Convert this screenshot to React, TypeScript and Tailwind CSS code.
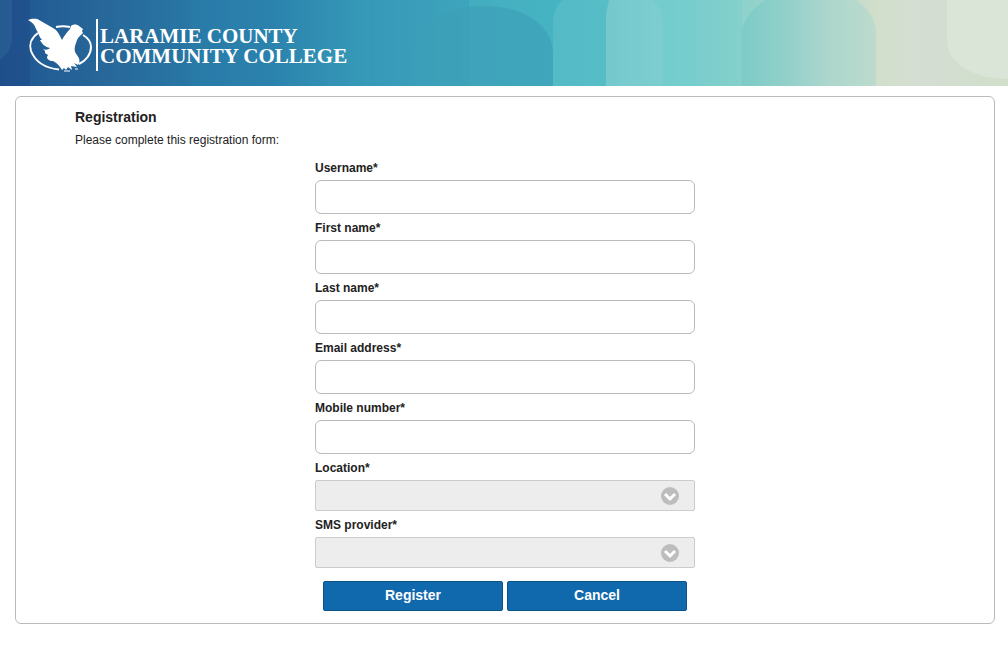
import type { ReactNode } from "react";

const textFields = [
  { id: "username", label: "Username", type: "text" },
  { id: "firstName", label: "First name", type: "text" },
  { id: "lastName", label: "Last name", type: "text" },
  { id: "email", label: "Email address", type: "email" },
  { id: "mobile", label: "Mobile number", type: "tel" },
];

const selectFields = [
  { id: "location", label: "Location" },
  { id: "smsProvider", label: "SMS provider" },
];

function BannerArt() {
  return (
    <svg
      aria-hidden="true"
      className="absolute inset-0 h-full w-full"
      viewBox="0 0 1008 86"
      preserveAspectRatio="none"
    >
      <defs>
        <linearGradient id="sky" gradientUnits="userSpaceOnUse" x1="0" y1="0" x2="1008" y2="0">
          <stop offset="0" stopColor="#20508a" />
          <stop offset="0.03" stopColor="#225b94" />
          <stop offset="0.1" stopColor="#276799" />
          <stop offset="0.19" stopColor="#2877a4" />
          <stop offset="0.28" stopColor="#2c85ae" />
          <stop offset="0.36" stopColor="#3799b8" />
          <stop offset="0.46" stopColor="#43adbf" />
          <stop offset="0.6" stopColor="#48b7c5" />
          <stop offset="0.68" stopColor="#76cdcd" />
          <stop offset="0.74" stopColor="#8dd2cb" />
          <stop offset="0.82" stopColor="#b0d6ca" />
          <stop offset="0.87" stopColor="#d2dfcb" />
          <stop offset="0.9" stopColor="#d4ded1" />
          <stop offset="0.93" stopColor="#d3ddd2" />
          <stop offset="1" stopColor="#d1dfca" />
        </linearGradient>
        <linearGradient id="arch" gradientUnits="userSpaceOnUse" x1="742" y1="0" x2="876" y2="0">
          <stop offset="0" stopColor="#7dcbc8" />
          <stop offset="0.35" stopColor="#93d0ca" />
          <stop offset="0.65" stopColor="#add6cd" />
          <stop offset="1" stopColor="#bcdbcc" />
        </linearGradient>
      </defs>
      <rect width="1008" height="86" fill="url(#sky)" />
      <path d="M0 0H12V38Q12 52 0 60Z" fill="#2b6296" fillOpacity="0.6" />
      <path d="M12 0H30V86H0V60Q12 52 12 38Z" fill="#204e8b" fillOpacity="0.7" />
      <path d="M191 0H278V86H191Z" fill="#2a82ae" fillOpacity="0.35" />
      <path d="M370 0H469V86H370Z" fill="#3797b9" fillOpacity="0.4" />
      <path d="M414 86V50C416 24 446 6 485 6C524 6 553 26 553 54V86Z" fill="#3c9fb8" fillOpacity="0.68" />
      <path d="M553 86V20Q554 8 563 0H742V86Z" fill="#76cdcd" fillOpacity="0.3" />
      <path d="M606 86V14L609 0H653Q663 9 663 20V86Z" fill="#88d1d2" fillOpacity="0.6" />
      <path d="M663 86V20Q663 9 653 0H690V86Z" fill="#75cdcd" fillOpacity="0.8" />
      <path d="M742 86V30Q746 12 766 0H855Q874 11 876 31V86Z" fill="url(#arch)" />
      <path d="M947 0H1008V79C974 79 947 63 947 42Z" fill="#dae5d8" />
    </svg>
  );
}

function EagleMark() {
  return (
    <svg aria-hidden="true" className="h-[54px] w-[66px] shrink-0" viewBox="0 0 66 54" fill="none">
      <path
        d="M10 15C3 20 1 27 3 33C7 43 16 50 31 51.5M51 46C58 43 63 36 63 29C63 24 60 20 55 17M28 9C33 8 37 8 42 9"
        stroke="#fff"
        strokeWidth="2"
      />
      <path
        d="M0 2C3 1 8 0 11 2L18 6L25 10C29 12 31 16 33 20L34 22C36 18 39 14 42 11L43 8C45 6 49 6 51 8L55 11L54 13L55 15C53 17 50 19 49 22L47 28C46 32 47 35 49 37C51 40 53 43 50 47L46 45L49 49L43 48L44 52L40 49L38 52L36 50L34 52L32 49C30 46 27 44 25 43C21 43 19 41 19 39L20 37L17 35L17 33L15 31C17 32 20 32 22 30C17 29 14 26 12 22L14 22C11 19 10 14 8 11C7 7 4 4 0 2Z"
        fill="#fff"
      />
      <path d="M47 51H50M36 53H42" stroke="#fff" strokeWidth="1" />
    </svg>
  );
}

function Field({ id, label, children }: { id: string; label: string; children: ReactNode }) {
  return (
    <div className="flex flex-col gap-1">
      <label htmlFor={id} className="text-xs font-bold">
        {label}*
      </label>
      {children}
    </div>
  );
}

export default function App() {
  return (
    <div className="min-h-screen bg-white font-['Liberation_Sans',Arial,sans-serif] text-[#222]">
      <header className="relative h-[86px] overflow-hidden">
        <BannerArt />
        <div className="relative flex h-full items-center gap-[2px] pl-7 pt-1 text-white">
          <EagleMark />
          <div className="flex h-[52px] items-center border-l-2 border-white pl-[2px] pt-[2px]">
            <p className="whitespace-nowrap font-['Liberation_Serif',serif] text-[21px] font-bold leading-5">
              LARAMIE COUNTY
              <br />
              COMMUNITY COLLEGE
            </p>
          </div>
        </div>
      </header>

      <main className="ml-[15px] mr-[13px] mt-[10px] rounded-md border border-[#bbb] px-[59px] pb-3 pt-[10px]">
        <h1 className="text-sm font-bold">Registration</h1>
        <p className="mt-[5px] text-xs">Please complete this registration form:</p>

        <form className="mx-auto mt-3 flex max-w-[380px] flex-col gap-[6px]">
          {textFields.map((f) => (
            <Field key={f.id} id={f.id} label={f.label}>
              <input
                id={f.id}
                type={f.type}
                className="h-[34px] w-full rounded-md border border-[#bbb] bg-white px-2 text-sm"
              />
            </Field>
          ))}

          {selectFields.map((f) => (
            <Field key={f.id} id={f.id} label={f.label}>
              <div className="relative">
                <select
                  id={f.id}
                  className="block h-[31px] w-full appearance-none rounded-xs border border-[#ccc] bg-[#ededed] px-2 text-sm"
                />
                <svg
                  aria-hidden="true"
                  className="pointer-events-none absolute right-4 top-[7px] h-[18px] w-[18px]"
                  viewBox="0 0 18 18"
                >
                  <circle cx="9" cy="9" r="9" fill="#bdbdbd" />
                  <path d="M4 7L9 12L14 7" fill="none" stroke="#fff" strokeWidth="3" />
                </svg>
              </div>
            </Field>
          ))}

          <div className="mt-[7px] flex gap-1 px-2">
            <button
              type="submit"
              className="h-[30px] flex-1 rounded-xs border border-[#0b5489] bg-[#1068ad] pb-[2px] text-sm font-bold text-white"
            >
              Register
            </button>
            <button
              type="button"
              className="h-[30px] flex-1 rounded-xs border border-[#0b5489] bg-[#1068ad] pb-[2px] text-sm font-bold text-white"
            >
              Cancel
            </button>
          </div>
        </form>
      </main>
    </div>
  );
}
